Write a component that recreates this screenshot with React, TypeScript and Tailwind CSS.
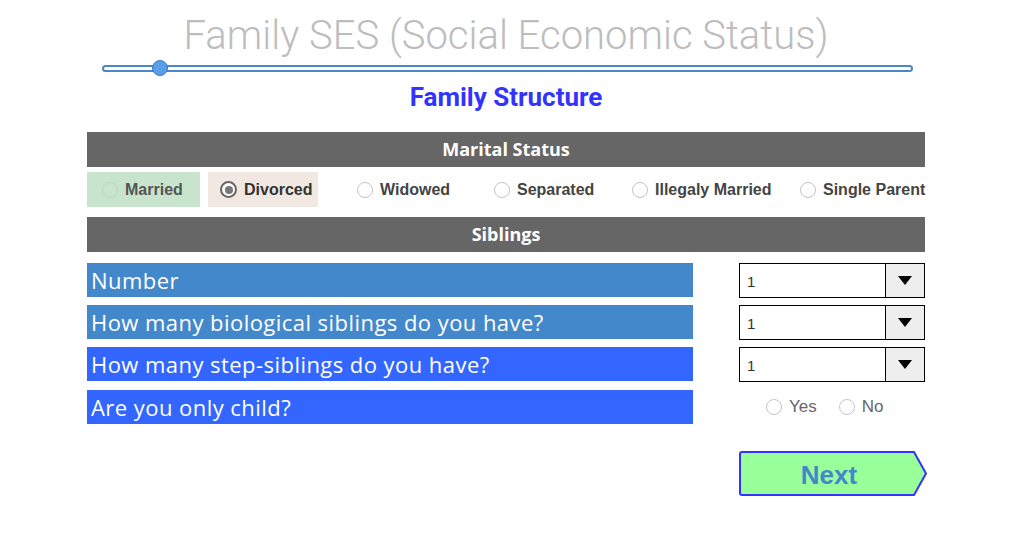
import React from "react";

const maritalOptions = [
  { label: "Married", ml: "ml-0", box: "w-[113px] bg-[#c8e4cc] pl-[15px]", text: "text-[#555]" },
  { label: "Divorced", ml: "ml-[8px]", box: "w-[110px] bg-[#f2e8e2] pl-[12px]", text: "text-[#333]", checked: true },
  { label: "Widowed", ml: "ml-[39px]", box: "w-[93px]", text: "text-[#444]" },
  { label: "Separated", ml: "ml-[44px]", box: "w-[99px]", text: "text-[#444]" },
  { label: "Illegaly Married", ml: "ml-[39px]", box: "w-[138px]", text: "text-[#444]" },
  { label: "Single Parent", ml: "ml-[30px]", box: "w-[125px]", text: "text-[#444]" },
];

function Radio({ checked, faint }: { checked?: boolean; faint?: boolean }) {
  if (checked) {
    return (
      <span className="w-[17px] h-[17px] rounded-full border-2 border-[#666] bg-white flex items-center justify-center shrink-0">
        <span className="w-[8px] h-[8px] rounded-full bg-[#777]" />
      </span>
    );
  }
  return (
    <span
      className={`block w-[16px] h-[16px] rounded-full border shrink-0 ${
        faint ? "border-[#b8d6bd] bg-[#c8e4cc]" : "border-[#c4c4c4] bg-white"
      }`}
    />
  );
}

function Select() {
  return (
    <div className="w-[186px] h-[35px] border border-black flex bg-white">
      <div className="flex-1 pl-[7px] pt-[8px] text-[15px] leading-[20px] text-[#333] font-['Liberation_Sans',Arial,sans-serif]">1</div>
      <div className="w-[39px] border-l border-black bg-[#eeeeee] flex items-center justify-center">
        <svg width="14" height="9" viewBox="0 0 14 9">
          <polygon points="0,0 14,0 7,9" fill="#000" />
        </svg>
      </div>
    </div>
  );
}

const rows = [
  { q: "Number", bg: "bg-[#4488cc]", mt: "mt-[11px]" },
  { q: "How many biological siblings do you have?", bg: "bg-[#4488cc]", mt: "mt-[7px]" },
  { q: "How many step-siblings do you have?", bg: "bg-[#3366ff]", mt: "mt-[7px]" },
  { q: "Are you only child?", bg: "bg-[#3366ff]", mt: "mt-[8px]", yesNo: true },
];

export default function App() {
  return (
    <div className="w-[1028px] h-[545px] bg-white overflow-hidden">
      <div className="ml-[87px] w-[838px]">
        <h1 className="pt-[12px] text-center text-[40px] leading-[48px] font-light text-[#bdbdbd] font-['Roboto',sans-serif]">
          Family SES (Social Economic Status)
        </h1>

        {/* progress slider */}
        <div className="relative ml-[15px] w-[811px] h-[14px] mt-[1px] flex items-center">
          <div className="w-full h-[7px] rounded-full border-2 border-[#4a86c8] bg-white" />
          <div className="absolute left-[50px] top-[-1px] w-[16px] h-[16px] rounded-full bg-[#5c9ee8] border border-[#3a78c4]" />
        </div>

        <h2 className="mt-[7px] text-center text-[26px] leading-[30px] font-bold text-[#3333ff] font-['Roboto',sans-serif]">
          Family Structure
        </h2>

        <div className="mt-[20px] h-[35px] bg-[#666666] flex items-center justify-center text-white text-[18px] font-bold font-['Open_Sans',sans-serif]">
          Marital Status
        </div>

        <div className="mt-[5px] h-[35px] flex font-['Liberation_Sans',Arial,sans-serif] text-[16px] font-bold">
          {maritalOptions.map((o) => (
            <div key={o.label} className={`${o.ml} ${o.box} h-full flex items-center gap-[7px] shrink-0`}>
              <Radio checked={o.checked} faint={o.label === "Married"} />
              <span className={`${o.text} whitespace-nowrap`}>{o.label}</span>
            </div>
          ))}
        </div>

        <div className="mt-[10px] h-[35px] bg-[#666666] flex items-center justify-center text-white text-[18px] font-bold font-['Open_Sans',sans-serif]">
          Siblings
        </div>

        {rows.map((r) => (
          <div key={r.q} className={`${r.mt} h-[35px] flex items-start`}>
            <div className={`w-[606px] h-[34px] ${r.bg} flex items-center pl-[4px] text-white text-[22px] tracking-[0.45px] font-['Open_Sans',sans-serif] whitespace-nowrap`}>
              {r.q}
            </div>
            <div className="ml-[46px]">
              {r.yesNo ? (
                <div className="h-[34px] pl-[27px] flex items-center text-[17px] text-[#666] font-['Liberation_Sans',Arial,sans-serif]">
                  <Radio />
                  <span className="ml-[7px]">Yes</span>
                  <span className="ml-[22px] flex items-center">
                    <Radio />
                  </span>
                  <span className="ml-[7px]">No</span>
                </div>
              ) : (
                <Select />
              )}
            </div>
          </div>
        ))}

        <button className="relative mt-[26px] ml-[652px] w-[188px] h-[45px] flex items-center justify-center">
          <svg className="absolute inset-0" width="188" height="45" viewBox="0 0 188 45">
            <path
              d="M3,1 L175,1 L187,22.5 L175,44 L3,44 Q1,44 1,42 L1,3 Q1,1 3,1 Z"
              fill="#99ff99"
              stroke="#3333ff"
              strokeWidth="2"
            />
          </svg>
          <span className="relative -ml-[8px] mt-[3px] text-[26px] font-bold text-[#4488cc] font-['Liberation_Sans',Arial,sans-serif]">
            Next
          </span>
        </button>
      </div>
    </div>
  );
}
